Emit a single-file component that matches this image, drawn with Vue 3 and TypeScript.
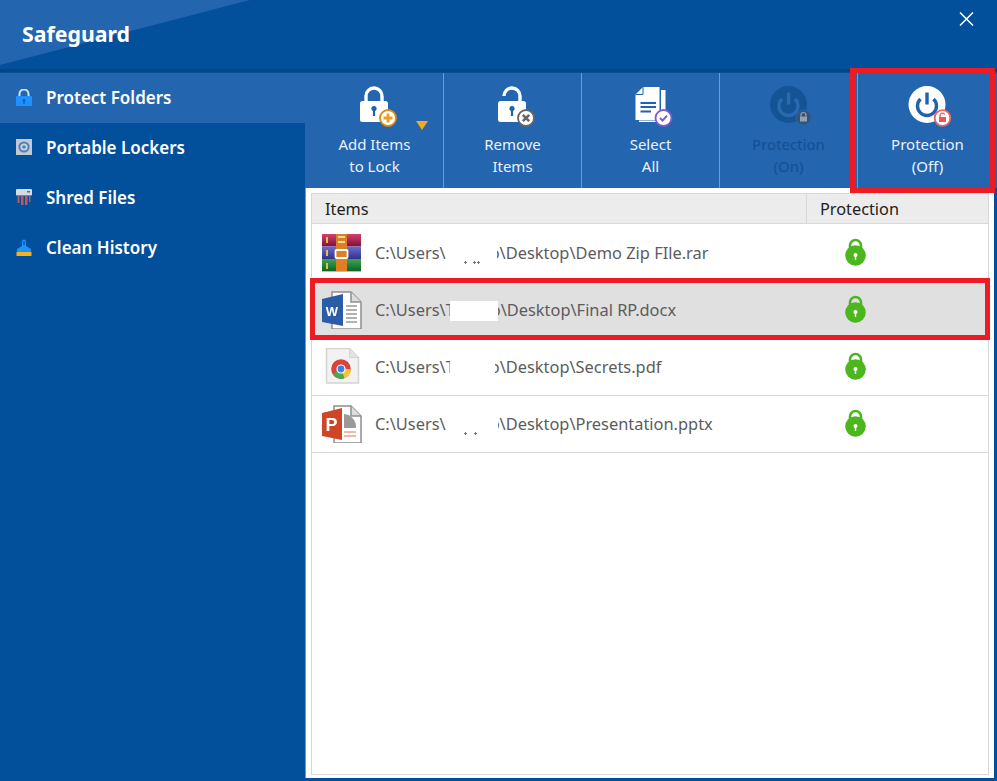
<template>
  <div class="app">
    <!-- 标题栏 -->
    <header class="title-bar">
      <span class="title">Safeguard</span>
      <svg class="close" viewBox="0 0 15 14" width="15" height="14">
        <path d="M1 .5 14 13.500M14 .5 1 13.500" stroke="#fff" stroke-width="1.500" fill="none" />
      </svg>
    </header>

    <div class="body">
      <!-- 左侧菜单 -->
      <nav class="sidebar">
        <div v-for="item in menu" :key="item.label" class="menu-item" :class="{ active: item.active }">
          <svg v-if="item.icon === 'lock'" viewBox="0 0 16 17" width="16" height="17">
            <path d="M3.500 8V5a4.500 4.500 0 0 1 9 0v3" fill="none" stroke="#cfe0f2" stroke-width="2" />
            <rect y="7" width="16" height="10" fill="#1e90ff" />
            <circle cx="8" cy="11.500" r="1.400" fill="#0b5fb0" />
            <rect x="7.400" y="12" width="1.200" height="3" fill="#0b5fb0" />
          </svg>
          <svg v-else-if="item.icon === 'safe'" viewBox="0 0 16 16" width="16" height="16">
            <rect width="16" height="16" fill="#c3c9d0" />
            <circle cx="8" cy="8" r="5.600" fill="#4f81b5" />
            <circle cx="8" cy="8" r="3.600" fill="#c9d5e2" />
            <circle cx="8" cy="8" r="1.800" fill="#4f81b5" />
          </svg>
          <svg v-else-if="item.icon === 'shred'" viewBox="0 0 16 16" width="16" height="16">
            <rect width="16" height="6.500" rx="1" fill="#d5dbe2" />
            <rect x="11" y="2" width="3" height="1.500" fill="#3f75b5" />
            <path d="M1.500 6.500h2V14h-2zM5 6.500h2.500V16H5zM9 6.500h2.500V16H9zM13 6.500h1.500V13H13z" fill="#c0595a" />
          </svg>
          <svg v-else viewBox="0 0 16 17" width="16" height="17">
            <path d="M6 2.500a2 2 0 0 1 4 0V7l5 3v3H1v-3l5-3z" fill="#1e90ff" />
            <rect x="7.200" y="2" width="1.600" height="4" fill="#0f5fb0" />
            <rect x=".5" y="13" width="15" height="4" fill="#f5b21c" />
          </svg>
          <span>{{ item.label }}</span>
        </div>
      </nav>

      <main class="content">
        <!-- 工具栏 -->
        <div class="toolbar">
          <div class="tool">
            <svg class="tool-icon" viewBox="0 0 44 44" width="44" height="44">
              <path d="M11 17v-6a8 8 0 0 1 16 0v6" fill="none" stroke="#fff" stroke-width="3.400" />
              <rect x="5" y="16" width="28" height="21" rx="2.500" fill="#fff" />
              <circle cx="19" cy="23.500" r="2.600" fill="#1f62ad" />
              <rect x="17.900" y="24" width="2.200" height="7" fill="#1f62ad" />
              <circle cx="33" cy="33" r="8" fill="#fff" stroke="#e08a10" stroke-width="1.800" />
              <path d="M33 28.500v9M28.500 33h9" stroke="#f0a020" stroke-width="2.800" />
            </svg>
            <span class="tool-label">Add Items<br />to Lock</span>
            <i class="caret"></i>
          </div>
          <div class="tool">
            <svg class="tool-icon" viewBox="0 0 44 44" width="44" height="44">
              <path d="M11 11a8 8 0 0 1 16 0v6" fill="none" stroke="#fff" stroke-width="3.400" />
              <rect x="5" y="16" width="28" height="21" rx="2.500" fill="#fff" />
              <circle cx="19" cy="23.500" r="2.600" fill="#1f62ad" />
              <rect x="17.900" y="24" width="2.200" height="7" fill="#1f62ad" />
              <circle cx="33" cy="33" r="8" fill="#fff" stroke="#666" stroke-width="1.800" />
              <path d="M29.800 29.800l6.400 6.400M36.200 29.800l-6.400 6.400" stroke="#666" stroke-width="2.600" />
            </svg>
            <span class="tool-label">Remove<br />Items</span>
          </div>
          <div class="tool">
            <svg class="tool-icon" viewBox="0 0 44 44" width="44" height="44">
              <path d="M30 5h4.500v32H8v-1.500h22z" fill="#fff" />
              <path d="M12 2h16.500v33H4.500V9.500z" fill="#fff" />
              <path d="M12 2v7.500H4.500" fill="none" stroke="#1f62ad" stroke-width="1" />
              <path d="M9.500 18H25M9.500 22H25M9.500 26.500H20" stroke="#1f62ad" stroke-width="2" />
              <circle cx="32.500" cy="33" r="8" fill="#fff" stroke="#7d5bd0" stroke-width="1.800" />
              <path d="M29 33l2.600 2.600 4.400-5" fill="none" stroke="#7d5bd0" stroke-width="2" />
            </svg>
            <span class="tool-label">Select<br />All</span>
          </div>
          <div class="tool disabled">
            <svg class="tool-icon" viewBox="0 0 44 44" width="44" height="44">
              <circle cx="19.500" cy="19.500" r="18.500" fill="#155494" />
              <path d="M13 14a9.500 9.500 0 1 0 13 0" fill="none" stroke="#2a69b0" stroke-width="3.400" />
              <path d="M19.500 7.500v12" stroke="#2a69b0" stroke-width="3.400" />
              <circle cx="34.500" cy="32.500" r="7.500" fill="#38536f" stroke="#2465ad" stroke-width="1" />
              <path d="M32 31.500V30a2.500 2.500 0 0 1 5 0v1.500" fill="none" stroke="#8fa3b8" stroke-width="1.200" />
              <rect x="31" y="31.500" width="7" height="5" fill="#8fa3b8" />
            </svg>
            <span class="tool-label">Protection<br />(On)</span>
          </div>
          <div class="tool">
            <svg class="tool-icon" viewBox="0 0 44 44" width="44" height="44">
              <circle cx="19" cy="19.500" r="18.500" fill="#fff" />
              <path d="M12.500 14a9.500 9.500 0 1 0 13 0" fill="none" stroke="#1f62ad" stroke-width="3.400" />
              <path d="M19 7.500v12" stroke="#1f62ad" stroke-width="3.400" />
              <circle cx="34.500" cy="33" r="7.800" fill="#fff" stroke="#e8656a" stroke-width="1.800" />
              <path d="M32 32v-1.500a2.500 2.500 0 0 1 4.700-1" fill="none" stroke="#e8565c" stroke-width="1.300" />
              <rect x="31" y="32" width="7" height="5" fill="#e8565c" />
            </svg>
            <span class="tool-label">Protection<br />(Off)</span>
          </div>
        </div>

        <!-- 列表 -->
        <div class="table-wrap">
          <div class="table">
            <div class="table-head">
              <div class="col-items">Items</div>
              <div class="col-prot">Protection</div>
            </div>
            <div class="rows">
              <div v-for="row in rows" :key="row.file" class="row" :class="{ selected: row.selected }">
                <div class="col-items cell">
                  <svg v-if="row.type === 'rar'" class="file-icon" viewBox="0 0 40 38" width="40" height="38">
                    <defs>
                      <linearGradient id="bookRed" x1="0" y1="0" x2="0" y2="1">
                        <stop offset="0" stop-color="#d5406c" />
                        <stop offset="1" stop-color="#7c1238" />
                      </linearGradient>
                      <linearGradient id="bookBlue" x1="0" y1="0" x2="0" y2="1">
                        <stop offset="0" stop-color="#6e6cd0" />
                        <stop offset="1" stop-color="#30308c" />
                      </linearGradient>
                      <linearGradient id="bookGreen" x1="0" y1="0" x2="0" y2="1">
                        <stop offset="0" stop-color="#3fa550" />
                        <stop offset="1" stop-color="#0f6428" />
                      </linearGradient>
                    </defs>
                    <rect width="39" height="12.500" fill="url(#bookRed)" />
                    <rect y="12.500" width="39" height="12.500" fill="url(#bookBlue)" />
                    <rect y="25" width="39" height="12" fill="url(#bookGreen)" />
                    <rect y="37" width="39" height="1" fill="#bbb" />
                    <rect x="14" width="11" height="37" fill="#dd7f22" />
                    <path d="M16 3h7M16 8h7" stroke="#f8dc9a" stroke-width="2" />
                    <rect x="13.500" y="16" width="12" height="8" rx="1" fill="none" stroke="#fff" stroke-width="1.800" />
                    <path d="M5 3v6M5 16v6M5 29v6" stroke="#e8c040" stroke-width="2" />
                  </svg>
                  <svg v-else-if="row.type === 'doc'" class="file-icon" viewBox="0 0 40 38" width="40" height="38">
                    <path d="M10 1h19l10 10v27H10z" fill="#fff" stroke="#8f8f8f" stroke-width="1.500" />
                    <path d="M29 1v10h10" fill="#ddd" stroke="#8f8f8f" stroke-width="1.500" />
                    <path d="M24 15h11M24 19h11M24 23h11M24 27h11M24 31h11" stroke="#999" stroke-width="1.500" />
                    <path d="M0 8 21 3v32L0 31z" fill="#2b5ca8" />
                    <text x="10" y="25" text-anchor="middle" class="glyph word">W</text>
                  </svg>
                  <svg v-else-if="row.type === 'pdf'" class="file-icon" viewBox="0 0 40 38" width="40" height="38">
                    <path d="M4.500 .5h23l9 9V35h-32z" fill="#f2f2f2" stroke="#d4d4d4" stroke-width="1.500" />
                    <path d="M27.500 .5v9h9" fill="#e2e2e2" stroke="#d4d4d4" stroke-width="1" />
                    <circle cx="19" cy="21" r="9.800" fill="#d8433a" />
                    <path d="M19 21 10.500 26A9.800 9.800 0 0 0 22.500 30.200z" fill="#4aa64f" />
                    <path d="M19 21 22.500 30.200A9.800 9.800 0 0 0 28.800 21z" fill="#f7c532" />
                    <circle cx="19" cy="21" r="4.600" fill="#fff" />
                    <circle cx="19" cy="21" r="3.400" fill="#3f7ee0" />
                  </svg>
                  <svg v-else class="file-icon" viewBox="0 0 40 38" width="40" height="38">
                    <path d="M12 1h17l10 10v27H12z" fill="#fff" stroke="#8f8f8f" stroke-width="1.500" />
                    <path d="M29 1v10h10" fill="#ddd" stroke="#8f8f8f" stroke-width="1.500" />
                    <path d="M22 9v14h12A13 13 0 0 0 22 9z" fill="#9a9a9a" />
                    <path d="M22 27h12M22 31h12" stroke="#e8a48c" stroke-width="1.500" />
                    <path d="M0 8 20 3v32L0 31z" fill="#cf4526" />
                    <text x="9.500" y="26" text-anchor="middle" class="glyph ppt">P</text>
                  </svg>
                  <span class="path">C:\Users\<span v-if="row.stub">T</span><span class="mask" :class="row.mask"></span>o\Desktop\{{ row.file }}</span>
                </div>
                <div class="col-prot cell lock-cell">
                  <svg class="green-lock" viewBox="0 0 21 28" width="21" height="28">
                    <path d="M5 12V7.500a5.500 5.500 0 0 1 11 0V12" fill="none" stroke="#4cb61e" stroke-width="2.600" />
                    <circle cx="10.500" cy="17.500" r="10.300" fill="#4cb61e" />
                    <circle cx="10.500" cy="17" r="2" fill="#fff" />
                    <rect x="9.800" y="17" width="1.400" height="5" fill="#fff" />
                  </svg>
                </div>
              </div>
            </div>
          </div>
        </div>

        <!-- 红色标注框 -->
        <div class="mark mark-tool"></div>
        <div class="mark mark-row"></div>
      </main>
    </div>
  </div>
</template>

<script setup lang="ts">
interface MenuItem {
  label: string;
  icon: string;
  active?: boolean;
}

interface Row {
  file: string;
  type: string;
  mask: string;
  stub?: boolean;
  selected?: boolean;
}

const menu: MenuItem[] = [
  { label: 'Protect Folders', icon: 'lock', active: true },
  { label: 'Portable Lockers', icon: 'safe' },
  { label: 'Shred Files', icon: 'shred' },
  { label: 'Clean History', icon: 'brush' },
];

const rows: Row[] = [
  { file: 'Demo Zip FIle.rar', type: 'rar', mask: 'mask-rar' },
  { file: 'Final RP.docx', type: 'doc', mask: 'mask-doc', stub: true, selected: true },
  { file: 'Secrets.pdf', type: 'pdf', mask: 'mask-pdf', stub: true },
  { file: 'Presentation.pptx', type: 'ppt', mask: 'mask-ppt' },
];
</script>

<style>
html,
body {
  margin: 0;
  background: #024f9b;
}
</style>

<style scoped>
.app {
  width: 997px;
  height: 781px;
  display: flex;
  flex-direction: column;
  background: #024f9b;
  font-family: "Noto Sans", "Open Sans", sans-serif;
  overflow: hidden;
}

.title-bar {
  position: relative;
  flex: none;
  height: 72px;
  box-sizing: border-box;
  padding: 0 22px 2px;
  display: flex;
  align-items: center;
  border-bottom: 3px solid #03467f;
  background: #024f9b;
}

.title-bar::before {
  content: "";
  position: absolute;
  left: 0;
  top: 0;
  width: 250px;
  height: 65px;
  background: #2365ae;
  clip-path: polygon(0 0, 100% 0, 0 100%);
}

.title {
  position: relative;
  color: #fff;
  font-size: 21.300px;
  font-weight: 700;
}

.close {
  position: absolute;
  right: 23px;
  top: 12px;
}

.body {
  flex: 1;
  display: flex;
  min-height: 0;
  padding-top: 1px;
}

.sidebar {
  flex: none;
  width: 305px;
}

.menu-item {
  height: 50px;
  box-sizing: border-box;
  padding: 0 0 2px 16px;
  display: flex;
  align-items: center;
  gap: 14px;
  color: #fff;
  font-size: 17px;
  font-weight: 600;
}

.menu-item.active {
  background: #2365ae;
}

.content {
  position: relative;
  flex: 1;
  min-width: 0;
  display: flex;
  flex-direction: column;
}

.toolbar {
  flex: none;
  height: 115px;
  padding-left: 1px;
  display: flex;
  background: #2365ae;
}

.tool {
  position: relative;
  flex: none;
  width: 138px;
  box-sizing: border-box;
  border-right: 1px solid #6c9bd0;
  display: flex;
  flex-direction: column;
  align-items: center;
  padding-top: 12px;
  color: #eaf2fb;
  font-size: 15px;
  line-height: 22px;
}

.tool:last-child {
  border-right: none;
  flex: 1;
}

.tool-icon {
  margin-left: 4px;
  margin-bottom: 4px;
}

.tool-label {
  text-align: center;
}

.tool.disabled {
  color: #124f96;
}

.caret {
  position: absolute;
  left: 110px;
  top: 48px;
  width: 0;
  height: 0;
  border-left: 6.500px solid transparent;
  border-right: 6.500px solid transparent;
  border-top: 9px solid #f5a81c;
}

.table-wrap {
  flex: 1;
  min-height: 0;
  margin: 0 3px 3px 0;
  padding: 5px 5px 3px 5px;
  display: flex;
  background: #fff;
  border-left: 1px solid #6c9bd0;
}

.table {
  flex: 1;
  min-width: 0;
  border: 1px solid #d8d8d8;
  border-top: none;
  color: #555;
  font-size: 16px;
}

.table-head {
  height: 31px;
  box-sizing: border-box;
  display: flex;
  align-items: center;
  background: #ececec;
  border: 1px solid #d8d8d8;
  border-width: 1px 0;
  color: #222;
  font-size: 16.300px;
}

.col-items {
  flex: 1;
  min-width: 0;
  padding-left: 13px;
}

.col-prot {
  flex: none;
  width: 182px;
  box-sizing: border-box;
  padding-left: 13px;
}

.table-head .col-prot {
  height: 100%;
  display: flex;
  align-items: center;
  border-left: 1px solid #d8d8d8;
}

.rows {
  padding-top: 1px;
}

.row {
  height: 57px;
  box-sizing: border-box;
  padding-bottom: 1px;
  display: flex;
  align-items: center;
  border-bottom: 1px solid #d8d8d8;
}

.row.selected {
  background: #e0e0e0;
}

.cell {
  display: flex;
  align-items: center;
}

.col-items.cell {
  padding-left: 10px;
  gap: 13px;
}

.col-prot.cell {
  padding-left: 39px;
}

.lock-cell {
  padding-bottom: 2px;
}

.file-icon {
  flex: none;
  filter: blur(0.4px);
}

.glyph {
  fill: #fff;
  font-family: "Liberation Sans", sans-serif;
  font-weight: 700;
}

.glyph.word {
  font-size: 13px;
}

.glyph.ppt {
  font-size: 18px;
}

.path {
  white-space: nowrap;
  color: #5c5c5c;
  font-size: 16.400px;
}

/* 路径里被涂白的用户名 */
.mask {
  position: relative;
  display: inline-block;
  height: 20px;
  vertical-align: middle;
  background-color: #fff;
}

.mask-rar {
  width: 51px;
  margin-right: -7px;
  background-image:
    radial-gradient(circle, #777 0 1px, transparent 1.200px),
    radial-gradient(circle, #777 0 1px, transparent 1.200px),
    radial-gradient(circle, #777 0 1px, transparent 1.200px);
  background-size: 3px 3px;
  background-repeat: no-repeat;
  background-position: 18px 17px, 27px 17px, 31px 17px;
}

.mask-doc {
  width: 48px;
  margin-left: -5px;
  margin-right: -7px;
}

.mask-pdf {
  width: 45px;
  margin-left: -5px;
  margin-right: -5px;
}

.mask-ppt {
  width: 52px;
  margin-right: -8px;
  background-image:
    radial-gradient(circle, #777 0 1px, transparent 1.200px),
    radial-gradient(circle, #777 0 1px, transparent 1.200px);
  background-size: 3px 3px;
  background-repeat: no-repeat;
  background-position: 18px 17px, 28px 17px;
}

/* 红框压在内容之上 */
.mark {
  position: absolute;
  box-sizing: border-box;
  border: 5px solid #ed1c24;
  pointer-events: none;
}

.mark-tool {
  left: 545px;
  top: -5px;
  width: 145px;
  height: 125px;
  border-left-width: 6px;
}

.mark-row {
  left: 5px;
  top: 205px;
  width: 680px;
  height: 62px;
}
</style>
